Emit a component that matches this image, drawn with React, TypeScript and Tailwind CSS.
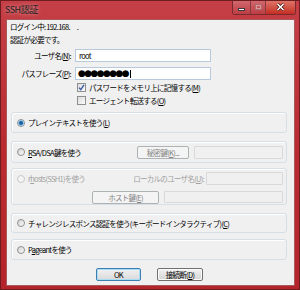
import React from "react";

const U = ({ c }: { c: string }) => <span className="underline">{c}</span>;

function Check({ checked }: { checked?: boolean }) {
  return (
    <span className="w-[9px] h-[9px] shrink-0 border border-[#8e8f8f] bg-linear-to-br from-[#dcdcdc] to-[#fbfbfb] flex items-center justify-center">
      {checked && (
        <svg width="7" height="7" viewBox="0 0 7 7">
          <path d="M1 3.6 L2.8 5.6 L6 0.8" stroke="#3b5aa8" strokeWidth="1.4" fill="none" />
        </svg>
      )}
    </span>
  );
}

function Radio({ on, disabled }: { on?: boolean; disabled?: boolean }) {
  return (
    <span
      className={
        disabled
          ? "w-[8px] h-[8px] shrink-0 rounded-full border border-[#c9c9c9] bg-[#f4f4f4] flex items-center justify-center"
          : "w-[8px] h-[8px] shrink-0 rounded-full border border-[#8e8f8f] bg-linear-to-br from-[#d2d2d2] to-[#fcfcfc] flex items-center justify-center"
      }
    >
      {on && <span className="w-[4px] h-[4px] rounded-full bg-[#1b5f9e] shadow-[0_0_0_1px_#8ec0e6]" />}
    </span>
  );
}

function Group({ h, children }: { h: string; children: React.ReactNode }) {
  return (
    <div className={`ml-[4px] w-[276px] ${h} rounded-[3px] border border-[#d5dfe5] shadow-[inset_1px_1px_0_#ffffff] flex flex-col`}>
      {children}
    </div>
  );
}

function Btn({ w, children, dis, def }: { w: string; children: React.ReactNode; dis?: boolean; def?: boolean }) {
  let cls = "";
  if (dis) cls = "border-[#adb2b5] bg-[#f4f4f4] text-[#838383]";
  else if (def) cls = "border-[#3c7fb1] bg-linear-to-b from-[#f2f2f2] to-[#d9d9d9] text-black shadow-[inset_0_0_0_1px_#a8dcf7]";
  else cls = "border-[#707070] bg-linear-to-b from-[#f2f2f2] to-[#d4d4d4] text-black shadow-[inset_0_0_0_1px_#fcfcfc]";
  return (
    <div className={`${w} h-[13px] shrink-0 rounded-[2px] border flex items-center justify-center ${cls}`}>{children}</div>
  );
}

export default function App() {
  return (
    <div className="w-[300px] h-[290px] bg-linear-to-b from-[#c53f47] via-[#b92a31] to-[#b3242b] border border-[#6e1c20] flex flex-col font-['Noto_Sans_CJK_JP',sans-serif] text-[7.5px] tracking-[-0.7px] text-black leading-[9px] overflow-hidden">
      {/* title bar */}
      <div className="h-[18px] flex items-start justify-between shrink-0">
        <span className="ml-[4px] mt-[3px] text-[9px] leading-[11px] tracking-[-0.5px] text-[#1a1a1a] [text-shadow:0_0_4px_rgba(255,255,255,0.6)]">SSH認証</span>
        <div className="flex h-[15px] mr-[3px] -mt-px rounded-b-[3px] border border-t-0 border-[#7a2a2e] shadow-[inset_0_0_0_1px_rgba(255,255,255,0.35)] overflow-hidden">
          <div className="w-[18px] h-full flex items-center justify-center border-r border-[#8a3a3e] bg-linear-to-b from-[#d26a71] to-[#bc3c43]">
            <span className="mt-[5px] w-[7px] h-[3px] bg-white border border-[#3a3a3a]" />
          </div>
          <div className="w-[15px] h-full flex items-center justify-center border-r border-[#8a3a3e] bg-linear-to-b from-[#d26a71] to-[#bc3c43]">
            <span className="w-[7px] h-[6px] border border-[#b06a6e] shadow-[inset_0_0_0_1px_#d99a9e]" />
          </div>
          <div className="w-[29px] h-full flex items-center justify-center bg-linear-to-b from-[#e0776d] to-[#c42a1f]">
            <svg width="9" height="8" viewBox="0 0 9 8">
              <path d="M1.5 1 L7.5 7 M7.5 1 L1.5 7" stroke="#3a1010" strokeWidth="3" />
              <path d="M1.5 1 L7.5 7 M7.5 1 L1.5 7" stroke="#ffffff" strokeWidth="1.6" />
            </svg>
          </div>
        </div>
      </div>

      {/* client */}
      <div className="ml-[5px] w-[289px] h-[267px] bg-[#f0f0f0] border border-[#a9585c] flex flex-col">
        <div className="h-[9px] mt-[2px] pl-[3px]">ログイン中: 192.168.　.</div>
        <div className="h-[9px] mt-[4px] pl-[3px]">認証が必要です。</div>

        <div className="h-[13px] mt-[5px] flex items-center">
          <div className="w-[64px] text-right">ユーザ名(<U c="N" />):</div>
          <div className="ml-[4px] w-[136px] h-[13px] bg-white border border-[#b7c9db] flex items-center pl-[3px]">root</div>
        </div>
        <div className="h-[13px] mt-[5px] flex items-center">
          <div className="w-[64px] text-right">パスフレーズ(<U c="P" />):</div>
          <div className="ml-[4px] w-[136px] h-[13px] bg-white border border-[#b7c9db] flex items-center pl-[2px]">
            <span className="text-[9px] tracking-[-1.6px] font-['DejaVu_Sans',sans-serif] leading-[11px]">●●●●●●●●</span>
            <span className="ml-[2px] w-px h-[8px] bg-black" />
          </div>
        </div>

        <div className="h-[9px] mt-[3px] ml-[70px] flex items-center gap-[3px]">
          <Check checked />
          <span>パスワードをメモリ上に記憶する(<U c="M" />)</span>
        </div>
        <div className="h-[9px] mt-[4px] ml-[70px] flex items-center gap-[3px]">
          <Check />
          <span>エージェント転送する(<U c="O" />)</span>
        </div>

        <div className="mt-[7px]">
          <Group h="h-[21px]">
            <div className="flex-1 flex items-center pl-[5px] gap-[3px]">
              <Radio on />
              <span>プレインテキストを使う(<U c="L" />)</span>
            </div>
          </Group>
        </div>

        <div className="mt-[8px]">
          <Group h="h-[22px]">
            <div className="flex-1 flex items-center justify-between pl-[5px] pr-[3px]">
              <div className="flex items-center gap-[3px]">
                <Radio />
                <span><U c="R" />SA/DSA鍵を使う</span>
              </div>
              <div className="flex items-center gap-[5px]">
                <Btn w="w-[52px]" dis>秘密鍵(<U c="K" />)...</Btn>
                <div className="w-[89px] h-[13px] rounded-[1px] border border-[#d9d9d9] bg-[#f0f0f0]" />
              </div>
            </div>
          </Group>
        </div>

        <div className="mt-[5px]">
          <Group h="h-[37px]">
            <div className="mt-[3px] h-[13px] flex items-center justify-between pl-[5px] pr-[3px] text-[#a0a0a0]">
              <div className="flex items-center gap-[3px]">
                <Radio disabled />
                <span>r<U c="h" />osts(SSH1)を使う</span>
              </div>
              <div className="flex items-center gap-[2px]">
                <span>ローカルのユーザ名(<U c="U" />):</span>
                <div className="w-[77px] h-[13px] rounded-[1px] border border-[#d9d9d9] bg-[#f0f0f0]" />
              </div>
            </div>
            <div className="mt-[6px] flex justify-end pr-[3px] gap-[5px]">
              <Btn w="w-[67px]" dis>ホスト鍵(<U c="E" />)</Btn>
              <div className="w-[119px] h-[12px] rounded-[1px] border border-[#d9d9d9] bg-[#f0f0f0]" />
            </div>
          </Group>
        </div>

        <div className="mt-[8px]">
          <Group h="h-[20px]">
            <div className="flex-1 flex items-center pl-[5px] gap-[3px]">
              <Radio />
              <span>チャレンジレスポンス認証を使う(キーボードインタラクティブ)(<U c="C" />)</span>
            </div>
          </Group>
        </div>

        <div className="mt-[6px]">
          <Group h="h-[21px]">
            <div className="flex-1 flex items-center pl-[5px] gap-[3px]">
              <Radio />
              <span>P<U c="a" />geantを使う</span>
            </div>
          </Group>
        </div>

        <div className="mt-[8px] ml-[89px] flex gap-[16px]">
          <Btn w="w-[45px]" def>OK</Btn>
          <Btn w="w-[46px]">接続断(<U c="D" />)</Btn>
        </div>
      </div>
    </div>
  );
}
